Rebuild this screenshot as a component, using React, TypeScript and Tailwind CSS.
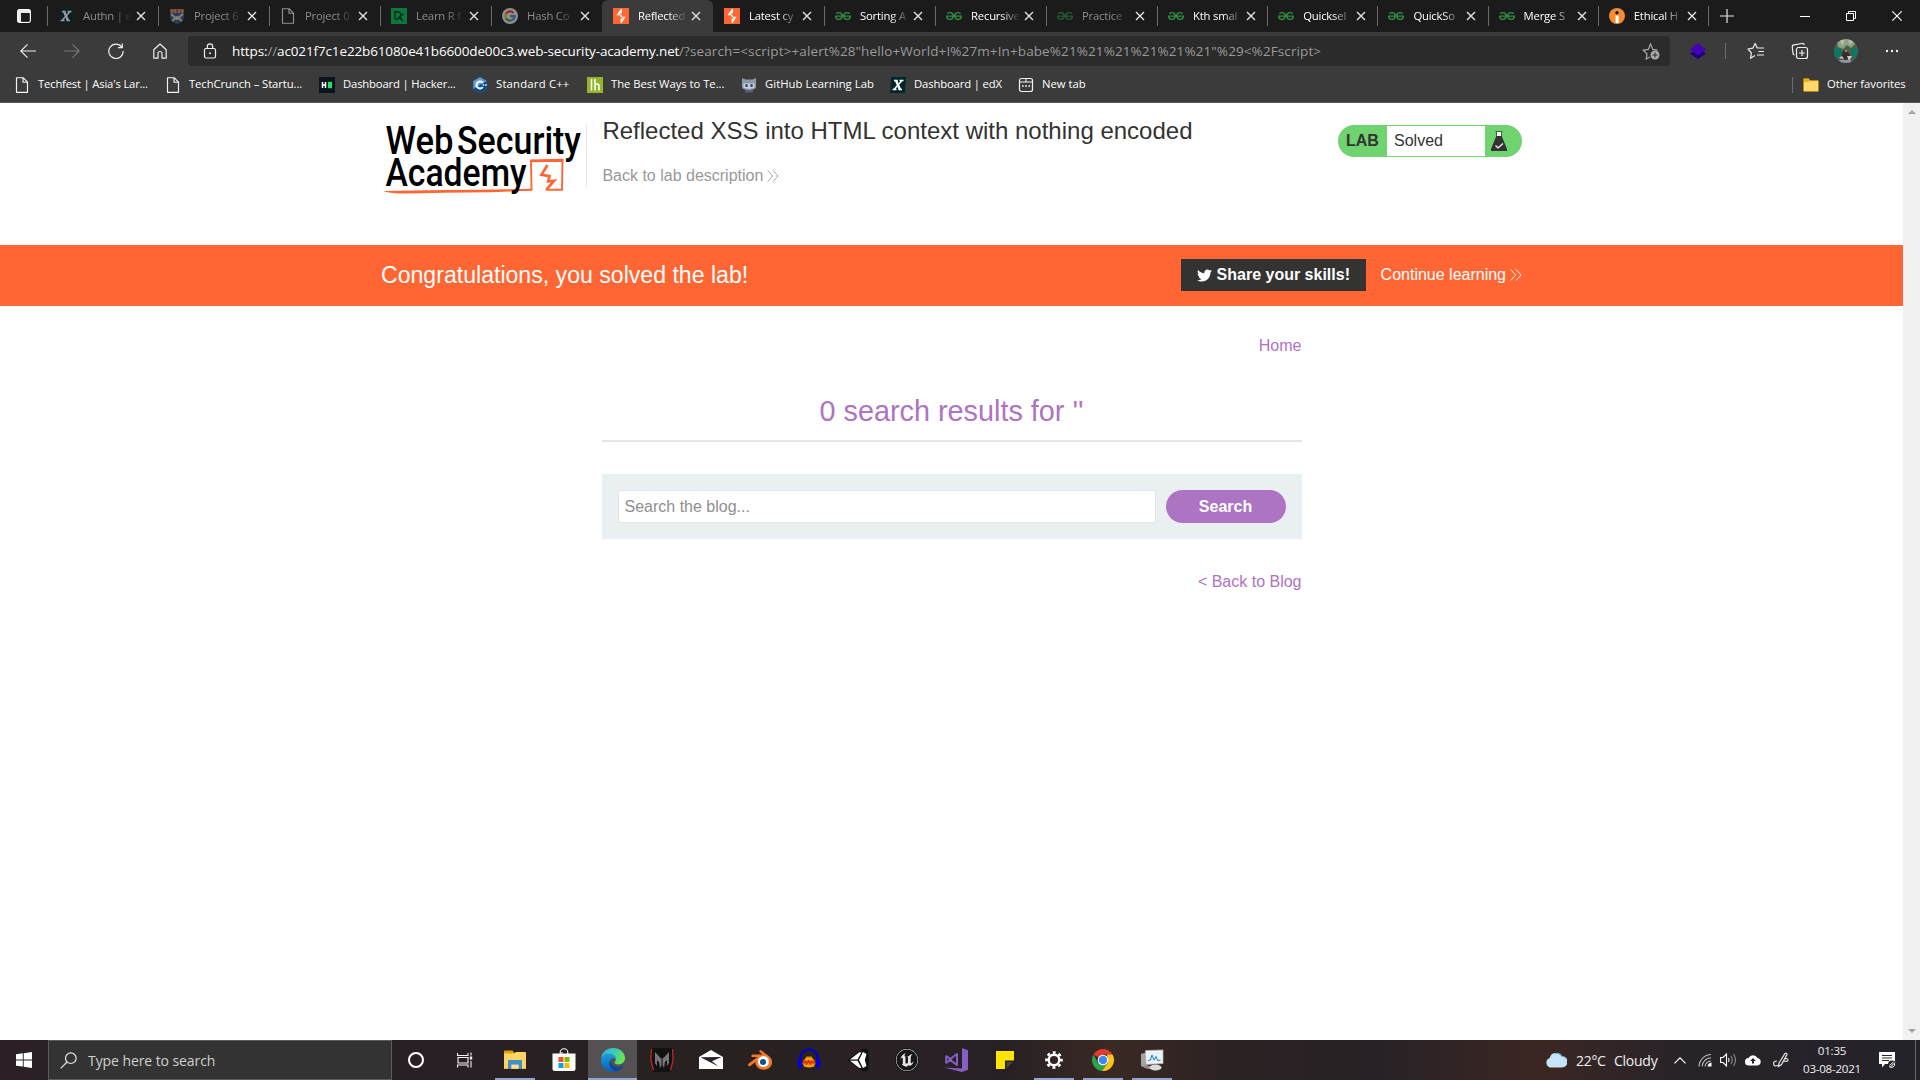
import React from "react";
import { FaTwitter } from "react-icons/fa";
import { SiGeeksforgeeks, SiUnrealengine, SiBlender } from "react-icons/si";

type Kids = { children: React.ReactNode };

const Box = ({ children, c = "size-4" }: Kids & { c?: string }) => (
  <svg viewBox="0 0 16 16" className={`${c} shrink-0`} fill="none">
    {children}
  </svg>
);

const EdX = () => (
  <Box>
    <path d="M1 0h15l-1 16H0z" fill="#02262b" />
    <path d="M4 3.5h3.600M9.500 3.5h4M2.500 12.500h4M8.500 12.500h3.500M12 3.500l-8 9" stroke="#fff" strokeWidth="1.500" />
    <path d="M6 3.500l4 9" stroke="#fff" strokeWidth="2.400" />
  </Box>
);
const Crest = () => (
  <Box>
    <path d="M1 1h14v4H1z" fill="#c2563f" />
    <path d="M3 1v4M6 1v4M10 1v4M13 1v4" stroke="#e8ddc8" strokeWidth=".8" />
    <path d="M1 5h14v3c0 4-3 6.500-7 8-4-1.500-7-4-7-8z" fill="#2b5aa0" />
    <path d="M2 6l6 5 6-5M3 13l5-4 5 4" stroke="#ead9a8" strokeWidth="1.800" />
  </Box>
);
const Page = () => (
  <Box>
    <path d="M2.500.7h6.600l4.400 4.400v10.200h-11zM9 .8V5.200h4.400" stroke="#f3f3f3" strokeWidth="1.150" strokeLinejoin="round" />
  </Box>
);
const DataCamp = () => (
  <Box>
    <path d="M0 0h16v16H0z" fill="#03c556" />
    <path d="M4 12V3.500c4 0 6 1.500 6 4S7 11 5 11.500M12.500 6L8 9l4 4" stroke="#062b1b" strokeWidth="1.300" />
  </Box>
);
const GoogleG = () => (
  <Box>
    <circle cx="8" cy="8" r="8" fill="#eee" />
    <g strokeWidth="2.300">
      <path d="M11.500 5A4.600 4.600 0 0 0 4 5.800" stroke="#ea4335" />
      <path d="M4 5.800a4.600 4.600 0 0 0 0 4.500" stroke="#fbbc05" />
      <path d="M4 10.300a4.600 4.600 0 0 0 7 1.200" stroke="#34a853" />
      <path d="M11 11.500a4.600 4.600 0 0 0 1.600-3.300H8" stroke="#4285f4" />
    </g>
  </Box>
);
const Burp = () => (
  <Box>
    <path d="M0 0h16v16H0z" fill="#ff6633" />
    <path d="M9 1v4.600h-3L9 7.800v1H12.500L8.500 15.200l-.9-.4V10.500h2.900L7 8.200v-1H3.500L8 .8z" fill="#fff" />
  </Box>
);
const Gfg = () => <SiGeeksforgeeks className="size-4 shrink-0 text-[#2f8d46]" />;
const Ethical = () => (
  <Box>
    <circle cx="8" cy="8" r="8" fill="#f68b33" />
    <path d="M6.600 7.500h3V15h-3z" fill="#fff" />
    <circle cx="8" cy="4.700" r="1.700" fill="#1a1a1a" />
  </Box>
);
const HackerRank = () => (
  <Box>
    <path d="M0 0h16v16H0z" fill="#0b1420" />
    <path d="M3.500 5v6M6.500 5v6M3.500 8h3" stroke="#fff" strokeWidth="1.500" />
    <path d="M9 4.800h4v6.400H9z" fill="#1ee65b" />
  </Box>
);
const Cpp = () => (
  <Box>
    <path d="M8 0l6.800 4v8L8 16l-6.800-4V4z" fill="#5a9bd6" />
    <path d="M14.800 4v8L8 16l-6.800-4L8 8z" fill="#0b4a8a" />
    <path d="M10.800 6A3.500 3.500 0 1 0 10.800 10" stroke="#fff" strokeWidth="2" />
    <path d="M10.500 8h2M11.500 7v2M13 8h2M14 7v2" stroke="#fff" strokeWidth=".7" />
  </Box>
);
const Lh = () => (
  <Box>
    <path d="M0 0h16v16H0z" fill="#94b42c" />
    <path d="M4.500 2v11.500M8 2v11.500M8 8c1-1.500 4-1.500 4 .5v5" stroke="#fff" strokeWidth="1.500" />
  </Box>
);
const Octocat = () => (
  <Box>
    <path d="M1 1l3.500 1.500h7L15 1v9c0 2-3 3-7 3s-7-1-7-3z" fill="#8c98a8" />
    <path d="M2.500 6.500h11v4c0 1.500-11 1.500-11 0z" fill="#c6d0db" />
    <circle cx="5.500" cy="8.500" r="1.500" fill="#31506f" />
    <circle cx="10.500" cy="8.500" r="1.500" fill="#31506f" />
    <path d="M4 13h8v2.500H4z" fill="#566273" />
  </Box>
);
const NewTabIcon = () => (
  <Box>
    <rect x="1.500" y="1.500" width="13" height="13" rx="2" stroke="#f3f3f3" strokeWidth="1.200" />
    <path d="M1.500 5h13M8 1.500V5" stroke="#f3f3f3" strokeWidth="1.100" />
    <path d="M4 9h1.700M7.200 9h1.700M10.400 9h1.700" stroke="#f3f3f3" strokeWidth="1.500" />
  </Box>
);
const Folder = () => (
  <Box>
    <path d="M.5 2.500q0-1 1-1h4l1.500 2h7.500q1 0 1 1v9q0 1-1 1h-13q-1 0-1-1z" fill="#ffd96f" stroke="#b98708" />
    <path d="M1 2h4.500l1.200 1.700L5.500 5H1z" fill="#e9b010" />
  </Box>
);
const Cross = () => (
  <svg viewBox="0 0 10 10" className="size-2.5 shrink-0" fill="none">
    <path d="M1 1l8 8M9 1L1 9" stroke="#e8e8e8" strokeWidth="1.300" />
  </svg>
);

type TabInfo = { t: string; icon: React.FC; dim?: boolean; active?: boolean };
const tabs: TabInfo[] = [
  { t: "Authn | e", icon: EdX, dim: true },
  { t: "Project 6", icon: Crest, dim: true },
  { t: "Project 0", icon: Page, dim: true },
  { t: "Learn R f", icon: DataCamp, dim: true },
  { t: "Hash Co", icon: GoogleG, dim: true },
  { t: "Reflected", icon: Burp, active: true },
  { t: "Latest cy", icon: Burp },
  { t: "Sorting A", icon: Gfg },
  { t: "Recursive", icon: Gfg },
  { t: "Practice", icon: Gfg, dim: true },
  { t: "Kth smal", icon: Gfg },
  { t: "Quicksel", icon: Gfg },
  { t: "QuickSo", icon: Gfg },
  { t: "Merge S", icon: Gfg },
  { t: "Ethical H", icon: Ethical },
];

function Tab({ tab, late }: { tab: TabInfo; late: boolean }) {
  const Icon = tab.icon;
  return (
    <div
      className={`flex h-8 shrink-0 items-center pl-[11px] ${late ? "w-[110.2px]" : "w-[111px]"} ${tab.active ? "rounded-t-md bg-[#3b3b3b]" : ""}`}
    >
      <span className={`flex shrink-0 ${tab.dim ? "opacity-55" : ""}`}>
        <Icon />
      </span>
      <span
        className={`ml-[9px] w-[50px] shrink-0 overflow-hidden text-[11.3px] tracking-[-0.2px] whitespace-nowrap [mask-image:linear-gradient(to_right,black_60%,transparent_98%)] ${tab.dim ? "text-[#8d8d8d]" : "text-white"}`}
      >
        {tab.t}
      </span>
      <span className="ml-[3px] flex">
        <Cross />
      </span>
    </div>
  );
}

function TabStrip() {
  return (
    <div className="flex h-8 items-center bg-[#1b1b1b]">
      <div className="flex w-[47px] shrink-0 justify-center">
        <svg viewBox="0 0 16 16" className="size-4" fill="none">
          <rect x="1.700" y="1.700" width="12.600" height="12.600" rx="2" stroke="#fff" strokeWidth="1.300" />
          <path d="M2 2h12v3H2zM2 2h3v12H2z" fill="#fff" fillOpacity=".9" />
          <path d="M5.500 5.500h8v8h-8z" fill="#1b1b1b" />
        </svg>
      </div>
      {tabs.map((tab, i) => (
        <React.Fragment key={i}>
          <span className={`-mr-px h-5 w-px shrink-0 ${i === 5 || i === 6 ? "bg-transparent" : "bg-[#6a6a6a]"}`} />
          <Tab tab={tab} late={i > 9} />
        </React.Fragment>
      ))}
      <span className="h-5 w-px shrink-0 bg-[#6a6a6a]" />
      <svg viewBox="0 0 14 14" className="ml-[11px] size-3.5 shrink-0" fill="none">
        <path d="M7 0v14M0 7h14" stroke="#e8e8e8" strokeWidth="1.200" />
      </svg>
      <div className="ml-auto flex h-7 shrink-0 items-center pr-[18px]">
        <svg viewBox="0 0 10 10" className="mr-9 size-2.5" fill="none">
          <path d="M0 5.500h10" stroke="#fff" />
        </svg>
        <svg viewBox="0 0 10 10" className="mr-9 size-2.5" fill="none">
          <path d="M.5 2.500h7v7h-7zM2.500 2.500v-2h7v7h-2" stroke="#fff" />
        </svg>
        <svg viewBox="0 0 10 10" className="size-2.5" fill="none">
          <path d="M.3.3l9.400 9.400M9.700.3L.3 9.700" stroke="#fff" strokeWidth="1.100" />
        </svg>
      </div>
    </div>
  );
}

function Toolbar() {
  return (
    <div className="flex h-[38px] items-center bg-[#3b3b3b]">
      <div className="flex w-[188px] shrink-0 items-center pl-5">
        <svg viewBox="0 0 16 16" className="size-4" fill="none">
          <path d="M16 8H1M7.500 1.300L.8 8l6.700 6.700" stroke="#eee" strokeWidth="1.200" />
        </svg>
        <svg viewBox="0 0 16 16" className="ml-7 size-4" fill="none">
          <path d="M0 8h15M8.500 1.300L15.200 8l-6.700 6.700" stroke="#777" strokeWidth="1.200" />
        </svg>
        <svg viewBox="0 0 16 16" className="ml-7 size-4" fill="none">
          <path d="M13.800 4A7.200 7.200 0 1 0 15.200 8M14.300.5v4.200h-4.300" stroke="#eee" strokeWidth="1.200" />
        </svg>
        <svg viewBox="0 0 16 16" className="ml-7 size-4" fill="none">
          <path d="M1.800 6.800L8 1l6.200 5.800v8.400H10V10.500a2 2 0 0 0-4 0v4.700H1.800z" stroke="#eee" strokeWidth="1.200" strokeLinejoin="round" />
        </svg>
      </div>
      <div className="flex h-[30px] w-[1482px] shrink-0 items-center rounded-[4px] bg-[#2b2b2b] pr-[10px] pl-[14px] text-[13.5px] whitespace-nowrap">
        <svg viewBox="0 0 16 16" className="size-4 shrink-0" fill="none">
          <rect x="2.500" y="5.500" width="11" height="9.500" rx="1.500" stroke="#eee" strokeWidth="1.200" />
          <path d="M5.300 5.500V3.500a2.700 2.700 0 0 1 5.400 0v2" stroke="#eee" strokeWidth="1.200" />
          <circle cx="8" cy="10.200" r="1" fill="#eee" />
        </svg>
        <span className="ml-3.5 w-[447px] shrink-0 tracking-[-0.13px] text-white">
          https:<span className="text-[#9a9a9a]">//</span>ac021f7c1e22b61080e41b6600de00c3.web-security-academy.net
        </span>
        <span className="tracking-[0.11px] text-[#9a9a9a]">
          {'/?search=<script>+alert%28"hello+World+I%27m+In+babe%21%21%21%21%21%21"%29<%2Fscript>'}
        </span>
        <svg viewBox="0 0 18 18" className="ml-auto size-[18px]" fill="none">
          <path d="M8 15l-3.700 2 .7-5L1.300 8.200l5-.8L8.500 2l2.400 5.400 4.600.7" stroke="#aaa" strokeWidth="1.200" />
          <circle cx="13" cy="13" r="4.500" fill="#aaa" />
          <path d="M13 10.500v5M10.500 13h5" stroke="#2b2b2b" />
        </svg>
      </div>
      <svg viewBox="0 0 16 16" className="ml-5 size-4 shrink-0">
        <path d="M0 10.500L8 5l8 5.500L8 16z" fill="#1d007c" />
        <path d="M8 0l8 6.500-8 6L0 6.500z" fill="#4600b6" />
      </svg>
      <span className="ml-[19px] h-4 w-px bg-[#6c6c6c]" />
      <svg viewBox="0 0 18 18" className="ml-[21px] size-[18px] shrink-0" fill="none">
        <path d="M8 13.600l-4.500 2.700.9-5.500L1 7l4.800-.8L8.200 1.500l2 4.500H17M11.500 9.500H17M10 13h7" stroke="#eee" strokeWidth="1.200" strokeLinejoin="round" />
      </svg>
      <svg viewBox="0 0 18 18" className="ml-[26px] size-[18px] shrink-0" fill="none">
        <rect x="5.500" y="5.500" width="11" height="11" rx="2" stroke="#eee" strokeWidth="1.200" />
        <path d="M11 8v6M8 11h6M3.500 13A2.500 2.500 0 0 1 2 11.500L1.300 5A2 2 0 0 1 3 2.800l8-1.300a2 2 0 0 1 2.300 1.500" stroke="#eee" strokeWidth="1.200" />
      </svg>
      <svg viewBox="0 0 24 24" className="ml-[25px] size-6 shrink-0">
        <clipPath id="avatar"><circle cx="12" cy="12" r="12" /></clipPath>
        <g clipPath="url(#avatar)">
          <path d="M0 0h24v24H0z" fill="#4c6244" />
          <path d="M3 3l3-3h12l3 5-4 4-4-3-4 4-5-2z" fill="#8fa183" />
          <path d="M6 1l2 6 3-6M14 1l2 5 3-4" fill="#b4c0a6" />
          <path d="M0 10l6-1 3 5-3 5H0zM16 9l8 1v7l-6 2z" fill="#117564" />
          <path d="M9 12l3-1 3 3 2 5-5 2-5-2z" fill="#3a2c2b" />
          <path d="M5 19l3-2 2 3M13 17l5 0-3 5z" fill="#d5c7c9" />
          <circle cx="12" cy="12" r="1.200" fill="#b47f68" />
          <path d="M5 21h12v3H5z" fill="#8b94a8" />
        </g>
      </svg>
      <svg viewBox="0 0 14 4" className="ml-[27px] h-1 w-3.5 shrink-0" fill="#eee">
        <circle cx="2" cy="2" r="1.200" />
        <circle cx="7" cy="2" r="1.200" />
        <circle cx="12" cy="2" r="1.200" />
      </svg>
    </div>
  );
}

const marks: { t: string; icon: React.FC; c: string }[] = [
  { t: "Techfest | Asia's Lar...", icon: Page, c: "w-[151px] tracking-[-0.2px]" },
  { t: "TechCrunch – Startu...", icon: Page, c: "w-[154px] tracking-[-0.1px]" },
  { t: "Dashboard | Hacker...", icon: HackerRank, c: "w-[153px] tracking-[-0.17px]" },
  { t: "Standard C++", icon: Cpp, c: "w-[115px] tracking-[0.2px]" },
  { t: "The Best Ways to Te...", icon: Lh, c: "w-[154px] tracking-[-0.04px]" },
  { t: "GitHub Learning Lab", icon: Octocat, c: "w-[149px] tracking-[0.04px]" },
  { t: "Dashboard | edX", icon: EdX, c: "w-[128px] tracking-[-0.15px]" },
  { t: "New tab", icon: NewTabIcon, c: "w-[100px]" },
];

function Bookmarks() {
  return (
    <div className="flex h-[33px] items-center border-b border-[#5a5a5a] bg-[#3b3b3b] pl-3.5 text-[11.3px] whitespace-nowrap text-white">
      <div className="flex flex-1 items-center pb-[3px]">
        {marks.map((m) => (
          <div key={m.t} className={`flex shrink-0 items-center gap-2 ${m.c}`}>
            <m.icon />
            <span>{m.t}</span>
          </div>
        ))}
        <span className="ml-auto h-4 w-px bg-[#6c6c6c]" />
        <div className="ml-2.5 flex w-[117px] items-center gap-2 tracking-[-0.05px]">
          <Folder />
          Other favorites
        </div>
      </div>
    </div>
  );
}

const Chevrons = () => (
  <svg viewBox="0 0 12 12" className="ml-1 size-3" fill="none" stroke="currentColor">
    <path d="M.7.5l5 5.500-5 5.500M6 .5L11 6l-5 5.500" strokeWidth=".9" />
  </svg>
);

function Logo() {
  return (
    <svg viewBox="0 0 206 80" className="h-20 w-[206px] shrink-0" fill="none">
      <path d="M2 71q60-.8 128-1.700l19.500-.6v2L110 72.200Q60 72.800 20 73.500 8 73 2 71z" fill="#ff6633" />
      <path d="M149 69.800h1.500L150 40.500l31.500-.7-.5 30h-15.500M150 41.300l31-.6" stroke="#ff6633" strokeWidth="1.900" strokeLinecap="round" />
      <path d="M166.500 45l-6 9.800 8 1.400-1.200 5.300 5.800-.8-7.600 9" stroke="#ff6633" strokeWidth="2.700" />
      <g fill="#000" className="[font-family:Roboto,sans-serif]" fontSize="38" fontWeight="500">
        <text x="4.500" y="34" textLength="68" lengthAdjust="spacingAndGlyphs">Web</text>
        <text x="76" y="34" textLength="124" lengthAdjust="spacingAndGlyphs">Security</text>
        <text x="4.500" y="66" textLength="141" lengthAdjust="spacingAndGlyphs">Academy</text>
      </g>
    </svg>
  );
}

function LabHeader() {
  return (
    <div className="mx-auto flex h-[142px] w-[1141px] items-start">
      <div className="mt-[17px] w-[205px] shrink-0">
        <Logo />
      </div>
      <div className="mt-[22px] h-[62px] w-px shrink-0 bg-[#e5e5e5]" />
      <div className="ml-[15.4px] shrink-0 pt-3.5">
        <h2 className="text-2xl leading-7 whitespace-nowrap text-[#333332]">Reflected XSS into HTML context with nothing encoded</h2>
        <a className="mt-[21px] flex items-center text-base leading-5 text-[#999]">
          Back to lab description
          <Chevrons />
        </a>
      </div>
      <div className="mt-[22px] ml-auto flex h-8 w-[184px] items-stretch overflow-hidden rounded-2xl bg-[#6fd36f] text-base text-[#333332]">
        <span className="w-[49px] pl-2 leading-8 font-bold">LAB</span>
        <span className="my-px w-[98px] bg-white pl-[7px] leading-[29px]">Solved</span>
        <svg viewBox="0 0 16 20" className="mt-1.5 ml-1.5 h-5 w-4" fill="none">
          <path d="M6 1h4v5H6z" fill="#fff" />
          <path d="M4.500.5h7M5.500 1v5M10.500 1v5" stroke="#333332" strokeWidth=".7" />
          <path d="M5.300 5h5.400L16 18v2H0v-2z" fill="#333332" />
          <path d="M4.500 14.500l2.500 2.500 5-4.500" stroke="#fff" strokeWidth="1.200" />
        </svg>
      </div>
    </div>
  );
}

function Banner() {
  return (
    <div className="h-[61px] bg-[#ff6633] pb-px text-white">
      <div className="mx-auto flex h-full w-[1141px] items-center">
        <span className="mr-auto text-[23.1px] leading-7">Congratulations, you solved the lab!</span>
        <button className="mr-[15px] flex h-8 w-[185px] items-center bg-[#333332] pl-4 font-bold whitespace-nowrap">
          <FaTwitter className="mr-[5px] size-[15px]" />
          Share your skills!
        </button>
        <a className="flex items-center whitespace-nowrap">
          Continue learning
          <Chevrons />
        </a>
      </div>
    </div>
  );
}

function Blog() {
  return (
    <div className="mx-auto flex w-[700px] flex-col text-base text-[#ad74c3]">
      <a className="mt-[30px] self-end leading-5">Home</a>
      <h1 className="mt-[37px] text-center text-[28.8px] leading-[36px]">0 search results for ''</h1>
      <div className="mt-[11px] h-0.5 bg-[#e5e5e5]" />
      <form className="mt-8 flex h-[65px] items-center gap-2.5 bg-[#eaeff2] px-4">
        <input
          className="h-[33px] w-[538px] border border-[#e3e5e8] bg-white px-1.5 text-base placeholder:text-[#8f8f8f]"
          placeholder="Search the blog..."
        />
        <button type="button" className="h-[33px] w-[120px] rounded-full bg-[#ad74c3] font-bold text-white">
          Search
        </button>
      </form>
      <a className="mt-[33px] self-end leading-5">&lt; Back to Blog</a>
    </div>
  );
}

function Scrollbar() {
  return (
    <div className="flex w-[17px] shrink-0 flex-col items-center justify-between bg-[#f1f1f1] py-[7px]">
      <svg viewBox="0 0 8 4" className="h-1 w-2" fill="#a3a3a3"><path d="M4 0l4 4H0z" /></svg>
      <svg viewBox="0 0 8 4" className="h-1 w-2" fill="#a3a3a3"><path d="M0 0h8L4 4z" /></svg>
    </div>
  );
}

const I24 = ({ children }: Kids) => (
  <svg viewBox="0 0 24 24" className="size-6" fill="none">{children}</svg>
);

const Explorer = () => (
  <I24>
    <path d="M1 3.500q0-1 1-1h7.500l2 2.500H23V21H1z" fill="#e0a012" />
    <path d="M1 5.500h10l2-1.500h9q1 0 1 1v15.500H1z" fill="#ffd562" />
    <path d="M5 21v-8q0-1 1-1h12q1 0 1 1v8h-3.500v-4.500h-7V21z" fill="#3e8fd0" />
    <path d="M8.500 17h7v3.500h-7z" fill="#ffe08a" />
  </I24>
);
const Store = () => (
  <I24>
    <path d="M8.200 6V4.500a3.800 3.800 0 0 1 7.600 0V6M10 5.500V4" stroke="#fff" strokeWidth="1.100" />
    <path d="M.5 5.500h23V21q0 2-2 2h-19q-2 0-2-2z" fill="#fff" />
    <path d="M6.500 9h5v5h-5z" fill="#f25022" />
    <path d="M12.500 9h5v5h-5z" fill="#7fba00" />
    <path d="M6.500 15h5v5h-5z" fill="#00a4ef" />
    <path d="M12.500 15h5v5h-5z" fill="#ffb900" />
  </I24>
);
const Edge = () => (
  <I24>
    <defs>
      <linearGradient id="eg" x1="0" y1="0" x2="1" y2=".4"><stop stopColor="#2cb1e0" /><stop offset=".5" stopColor="#35c8c6" /><stop offset="1" stopColor="#66e452" /></linearGradient>
      <linearGradient id="eb" x1="0" y1="0" x2="0" y2="1"><stop stopColor="#1b9de2" /><stop offset="1" stopColor="#0b5fb8" /></linearGradient>
    </defs>
    <path d="M0 11C.5 4.500 5.500 0 12 0c7 0 12 4.800 12 10.300 0 4-3.200 6.200-6.500 6.200-2.800 0-4-1-4-1.900 0-.6 1.300-1.100 1.300-3.300C14.800 8.500 12 6 8 6 4 6 1 8 0 11z" fill="url(#eg)" />
    <path d="M0 12.500C0 9 3.500 6 8 6c4 0 6.800 2.300 6.800 5.300C13.500 9.500 9 9.500 8.500 14c-.4 4.500 3 8 6.500 9.500C7 25.500 0 20 0 12.500z" fill="url(#eb)" />
    <path d="M9.500 11.500C7 15 8.500 21.500 15 23.500c3.200-.5 6-2.500 7.500-5 .3-.5-.2-.8-.6-.5-5.400 2.500-12.400.5-12.400-6.500z" fill="#0c4a94" />
  </I24>
);
const Predator = () => (
  <I24>
    <path d="M2 0h20v18l-2 6H4l-2-6z" fill="#121212" />
    <path d="M1.500 1L.8 12l2.700 10M22.500 1l.7 11-2.700 10" stroke="#c9252b" strokeWidth="1.200" />
    <path d="M5 4l5 5.500 1.500 1v6.500L10 20l-1-6-2-2v6l-2-3zM19 4l-5 5.500-1.500 1v6.500L14 20l1-6 2-2v6l2-3z" fill="#77777b" />
  </I24>
);
const Mail = () => (
  <I24>
    <path d="M0 9l12-7 12 7v12H0z" fill="#fff" />
    <path d="M1.500 9.300L22.500 9 13 13.200l6.500 5.300z" fill="#2a2326" />
  </I24>
);
const Blender = () => (
  <div className="relative size-6">
    <SiBlender className="size-6 text-[#f5792a]" />
    <span className="absolute top-[8px] left-[10px] flex size-[11px] items-center justify-center rounded-full bg-white">
      <span className="size-[6px] rounded-full bg-[#0f4f94]" />
    </span>
  </div>
);
const Audacity = () => (
  <I24>
    <path d="M2.500 14C2.500-3 21.500-3 21.500 14" stroke="#0000c8" strokeWidth="2.200" />
    <path d="M5.500 15c.5-3 3-4 4-6.500h5c1 2.500 3.500 3.500 4 6.500-.5 6-12.500 6-13 0z" fill="#e88a00" />
    <path d="M7 18h10M8.500 11h7" stroke="#f7c51e" />
    <path d="M6 15l2-1.500 1.500 2 2-2.500 2 2.500 1.500-2 3 1.500" stroke="#e02a00" strokeWidth="2" />
    <path d="M5 9.500v11q-4 .5-4.500-5Q.5 10 5 9.500zM19 9.500v11q4 .5 4.500-5 0-5.500-4.500-6z" fill="#0000d8" />
  </I24>
);
const Unity = () => (
  <I24>
    <path d="M1 12L17 1l5 0 1 11-1 11h-5z" fill="#101010" />
    <path d="M4 11.400L13 4.500l2.500-.2-4 7.100zM4 12.800l9 6.900 2.500.2-4-7.100zM17 4l3.500 2-1.700 6 1.700 6L17 20l-4-8z" fill="#fff" />
  </I24>
);
const Unreal = () => (
  <div className="flex size-6 items-center justify-center rounded-full bg-[#171717]">
    <SiUnrealengine className="size-[22px] text-[#e6e6e6]" />
  </div>
);
const VisualStudio = () => (
  <I24>
    <path d="M18 0l6 2.200v19.600L18 24 0 19.500l18 1z" fill="#865fc5" />
    <path d="M2.200 8.200v6.600l5-3.300zM13 6v11L5.500 11.500z" stroke="#865fc5" strokeWidth="2" strokeLinejoin="round" />
  </I24>
);
const Sticky = () => (
  <I24>
    <path d="M3 3h18v18H3z" fill="#ffe500" />
    <path d="M12 21v-8.500h9V21z" fill="#242022" />
    <path d="M13.500 20.500V14H20z" fill="#494448" />
  </I24>
);
const Gear = () => (
  <I24>
    <circle cx="12" cy="12" r="5.300" stroke="#fff" strokeWidth="2.400" />
    <circle cx="12" cy="12" r="7.500" stroke="#fff" strokeWidth="2.600" strokeDasharray="2.945 2.945" strokeDashoffset="1.470" />
  </I24>
);
const Chrome = () => (
  <I24>
    <path d="M12 12L2.500 6.500A11 11 0 0 1 21.500 6.500H12z" fill="#e33b2e" />
    <path d="M2.500 6.500A11 11 0 0 0 11 23L17 15 12 12 7 14.800z" fill="#2ca24c" />
    <path d="M21.500 6.500A11 11 0 0 1 11 23L17 14.800 16 6.500z" fill="#fcc31e" />
    <circle cx="12" cy="12" r="5.300" fill="#fff" />
    <circle cx="12" cy="12" r="4.200" fill="#4286f3" />
  </I24>
);
const PerfMon = () => (
  <I24>
    <path d="M1 6l5-1.500V19l-5-1z" fill="#a3a3a3" />
    <path d="M5.500 2.500L23 2v13.500L6 16.500z" fill="#f3f3f3" stroke="#b4b4b4" strokeWidth=".8" />
    <path d="M7.500 4.500L21 4v10L7.500 14.500z" fill="#e3f2fb" />
    <path d="M8 12.500l2.500-.5 1.500-5 2 5 2-3.500 1.500 4 3-.5" stroke="#2c7fb0" />
    <path d="M1 18l5-1 4 1v3l-4-.5z" fill="#8d9194" />
    <ellipse cx="15.500" cy="19.500" rx="6" ry="3" fill="#dadada" />
  </I24>
);

const apps: { icon: React.FC; open?: boolean; active?: boolean }[] = [
  { icon: Explorer, open: true },
  { icon: Store },
  { icon: Edge, active: true },
  { icon: Predator },
  { icon: Mail },
  { icon: Blender },
  { icon: Audacity },
  { icon: Unity },
  { icon: Unreal },
  { icon: VisualStudio },
  { icon: Sticky },
  { icon: Gear, open: true },
  { icon: Chrome, open: true },
  { icon: PerfMon, open: true },
];

function Tray() {
  return (
    <div className="ml-auto flex h-full items-center text-[#f0f0f0]">
      <svg viewBox="0 0 22 16" className="h-4 w-[22px]">
        <path d="M5 15.500a5 5 0 0 1-.3-9.500A6.500 6.500 0 0 1 16.500 4 5.600 5.600 0 0 1 17 15.500z" fill="#c5e4f8" />
        <path d="M9 2.500a6 6 0 0 1 8 2.500 5.500 5.500 0 0 1 4 7c.8-4-1-6-3-6.500C16.500.5 12-.8 9 2.500z" fill="#4b9bd8" />
      </svg>
      <span className="ml-[9px] w-[38px] text-[14px] tracking-[-0.3px]">22°C</span>
      <span className="w-[60px] text-[14px] tracking-[-0.25px]">Cloudy</span>
      <svg viewBox="0 0 12 7" className="h-[7px] w-3" fill="none"><path d="M.5 6.300L6 .8l5.500 5.500" stroke="#fff" strokeWidth="1.200" /></svg>
      <svg viewBox="0 0 14 14" className="ml-3 size-3.5" fill="none">
        <g stroke="#bbb" strokeWidth="1.100">
          <path d="M1 13.500A12.500 12.500 0 0 1 13 1.500" />
          <path d="M4 13.500A9.500 9.500 0 0 1 13 4.800" />
          <path d="M7 13.500A6.500 6.500 0 0 1 13 8" />
        </g>
        <path d="M9.500 13.500q.5-3.500 4-4v4z" fill="#fff" />
      </svg>
      <svg viewBox="0 0 17 14" className="ml-2 h-3.5 w-[17px]" fill="none">
        <path d="M.6 4.500h2.500L6.500 1v12L3.100 9.500H.6z" stroke="#fff" strokeWidth="1.100" />
        <path d="M8.500 5q1.200 2 0 4" stroke="#fff" strokeWidth="1.100" />
        <path d="M11 3q2.500 4 0 8M13.500 1q4 6 0 12" stroke="#8a8a8a" strokeWidth="1.100" />
      </svg>
      <svg viewBox="0 0 16 12" className="ml-2 h-3 w-4">
        <path d="M4 11.500A3.700 3.700 0 0 1 3.500 4 5 5 0 0 1 12.500 4a3.800 3.800 0 0 1 0 7.500z" fill="#fff" />
        <path d="M8 4l3 3H9v2.500H7V7H5z" fill="#28242a" />
      </svg>
      <svg viewBox="0 0 16 16" className="ml-3 size-4" fill="none">
        <path d="M4 9q-4 0-3.200 3.500.7 2.500 4 .8M6 11L12 1.500q2-1 2 1L8.500 12.500l-3 2zM11 7q4-1 4 1t-4 1" stroke="#e8e8e8" strokeWidth="1.200" />
      </svg>
      <div className="ml-2 flex w-[70px] flex-col items-center text-[11.6px] leading-[18px] tracking-[-0.25px] whitespace-nowrap">
        <span>01:35</span>
        <span>03-08-2021</span>
      </div>
      <svg viewBox="0 0 18 18" className="ml-[11px] size-[18px]" fill="none">
        <path d="M1 1h16v12H7l-3 3.500V13H1z" fill="#fff" />
        <path d="M4 4.500h10M4 7h10M4 9.500h7" stroke="#28242a" />
        <circle cx="14" cy="13.500" r="4" fill="#28242a" />
        <path d="M11.500 15.500a3 3 0 0 0 5-3M11.500 14.500l4-3.500M12 16.500l5-5" stroke="#fff" />
      </svg>
      <span className="mr-1 ml-[19px] h-full w-px bg-[#6a666a]" />
    </div>
  );
}

function Taskbar() {
  return (
    <div className="flex h-10 items-center bg-[linear-gradient(to_right,#2a2025,#282024_25%,#27211f_38%,#2a2126_48%,#272024_52%,#3a2923_58%,#2b2223_64%,#282226_72%,#3b2723_80%,#272329_88%,#242329)] [font-family:'Open_Sans',sans-serif]">
      <div className="flex w-12 shrink-0 justify-center">
        <svg viewBox="0 0 16 16" className="size-4" fill="#fff">
          <path d="M0 2.300l6.800-1v6.200H0zM7.700 1.200L16 0v7.500H7.700zM0 8.400h6.800v6.200L0 13.700zM7.700 8.400H16V16l-8.300-1.200z" />
        </svg>
      </div>
      <div className="flex h-10 w-[344px] shrink-0 items-center border border-[#5d5d5d] bg-[#333] pl-[11px] text-[#d0d0d0]">
        <svg viewBox="0 0 17 17" className="size-[17px]" fill="none">
          <circle cx="10.800" cy="6.200" r="5.300" stroke="#e5e5e5" strokeWidth="1.200" />
          <path d="M7 10L.7 16.300" stroke="#e5e5e5" strokeWidth="1.200" />
        </svg>
        <span className="ml-[11px] text-[14px] tracking-[-0.08px]">Type here to search</span>
      </div>
      <div className="flex w-12 shrink-0 justify-center">
        <span className="size-4 rounded-full border-2 border-white" />
      </div>
      <div className="flex w-[49px] shrink-0 justify-center">
        <svg viewBox="0 0 16 16" className="size-4" fill="none" stroke="#f5f5f5" strokeWidth="1.100">
          <path d="M.5 1v2.500h10.500V1M.5 15.500V13h10.500v2.500M1 5.500h10v5.500H1zM14 .5v3M14 9v6.500" />
          <path d="M14 4.500v3" strokeWidth="2.400" />
        </svg>
      </div>
      <div className="ml-px flex">
        {apps.map((a, i) => (
          <div key={i} className={`flex h-10 w-[49px] shrink-0 flex-col items-center justify-between pt-2 ${a.active ? "bg-[#555153]" : ""}`}>
            <a.icon />
            <span className={`h-0.5 ${a.active ? "w-full bg-[#93a5cf]" : a.open ? "w-10 bg-[#93a5cf]" : "w-10"}`} />
          </div>
        ))}
      </div>
      <Tray />
    </div>
  );
}

export default function App() {
  return (
    <div className="flex h-[1080px] w-[1920px] flex-col overflow-hidden bg-white">
      <div className="[font-family:'Open_Sans',sans-serif]">
        <TabStrip />
        <Toolbar />
        <Bookmarks />
      </div>
      <div className="flex flex-1">
        <main className="flex-1 [font-family:'Liberation_Sans',Arial,sans-serif]">
          <LabHeader />
          <Banner />
          <Blog />
        </main>
        <Scrollbar />
      </div>
      <Taskbar />
    </div>
  );
}
